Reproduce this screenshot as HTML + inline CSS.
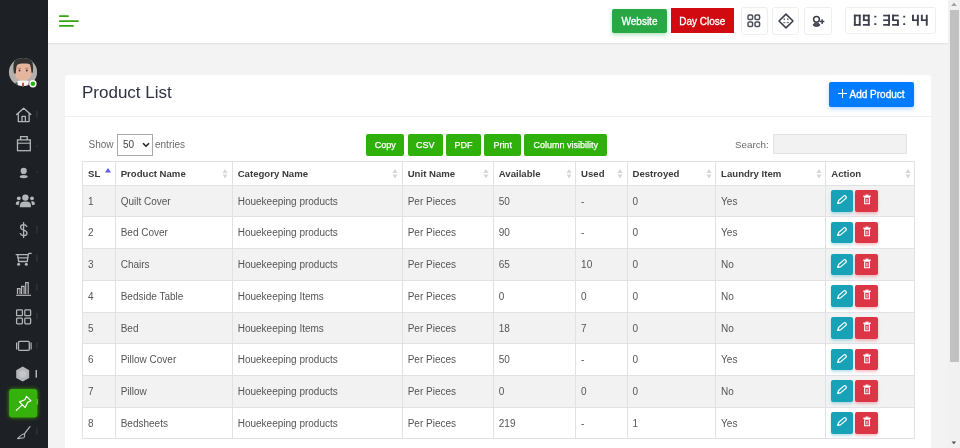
<!DOCTYPE html><html><head><meta charset="utf-8"><style>
*{margin:0;padding:0;box-sizing:border-box}
html,body{width:960px;height:448px;overflow:hidden;background:#f3f3f3;font-family:"Liberation Sans", sans-serif}
.a{position:absolute}
.t{position:absolute;white-space:nowrap;line-height:1}
.wrap{position:absolute;left:0;top:0;width:960px;height:448px;will-change:transform;opacity:0.999}
</style></head><body><div class="wrap">

<div class="a" style="left:0;top:0;width:48px;height:448px;background:#1d2024"></div>
<div class="a" style="left:48px;top:0;width:900px;height:43.4px;background:#fff;box-shadow:0 1px 2px rgba(0,0,0,.09)"></div>
<div class="a" style="left:948px;top:0;width:12px;height:448px;background:#f1f1f1"></div>
<div class="a" style="left:949.5px;top:9.7px;width:9px;height:352px;background:#c1c1c1"></div>
<svg class="a" style="left:948px;top:0" width="12" height="448"><path d="M3.2 5.9 L6 2.6 L8.8 5.9Z" fill="#a3a3a3"/><path d="M3.6 441.5 L8.1 441.5 L5.85 444.2Z" fill="#505050"/></svg>
<div class="a" style="left:65px;top:75.2px;width:866px;height:400px;background:#fff;border-radius:3px"></div>
<div class="a" style="left:65px;top:116px;width:866px;height:1px;background:#eef0f3"></div>
<div class="t" style="left:82px;top:84px;font-size:17px;color:#2f3240">Product List</div>
<div class="a" style="left:828.5px;top:82.3px;width:85.5px;height:24.6px;background:#007bff;border-radius:2px;box-shadow:0 2px 4px rgba(0,123,255,.3)"></div>
<div class="t" style="left:849.5px;top:89.6px;font-size:10px;color:#fff;-webkit-text-stroke:0.3px #fff">Add Product</div>
<div class="a" style="left:838px;top:92.8px;width:8.5px;height:1.1px;background:#fff"></div>
<div class="a" style="left:841.7px;top:89px;width:1.1px;height:8.6px;background:#fff"></div>
<div class="t" style="left:88.5px;top:140px;font-size:10px;color:#6b6b6b">Show</div>
<div class="a" style="left:117.2px;top:134px;width:35.6px;height:21.5px;border:1px solid #a9a9a9;background:#fff"></div>
<div class="t" style="left:123px;top:140px;font-size:10px;color:#444">50</div>
<svg class="a" style="left:142px;top:142px" width="8" height="6" viewBox="0 0 8 6"><path d="M1 1.2 L4 4.2 L7 1.2" fill="none" stroke="#222" stroke-width="1.6"/></svg>
<div class="t" style="left:155px;top:140px;font-size:10px;color:#6b6b6b">entries</div>
<div class="a" style="left:366.1px;top:134.1px;width:38.3px;height:22.1px;background:#2fb00b;border-radius:2px;display:flex;align-items:center;justify-content:center;font-size:9px;color:#fff;white-space:nowrap;-webkit-text-stroke:0.25px #fff;padding-top:0.5px">Copy</div>
<div class="a" style="left:407.7px;top:134.1px;width:35.3px;height:22.1px;background:#2fb00b;border-radius:2px;display:flex;align-items:center;justify-content:center;font-size:9px;color:#fff;white-space:nowrap;-webkit-text-stroke:0.25px #fff;padding-top:0.5px">CSV</div>
<div class="a" style="left:446.3px;top:134.1px;width:34.6px;height:22.1px;background:#2fb00b;border-radius:2px;display:flex;align-items:center;justify-content:center;font-size:9px;color:#fff;white-space:nowrap;-webkit-text-stroke:0.25px #fff;padding-top:0.5px">PDF</div>
<div class="a" style="left:484.3px;top:134.1px;width:36.7px;height:22.1px;background:#2fb00b;border-radius:2px;display:flex;align-items:center;justify-content:center;font-size:9px;color:#fff;white-space:nowrap;-webkit-text-stroke:0.25px #fff;padding-top:0.5px">Print</div>
<div class="a" style="left:524.4px;top:134.1px;width:82.9px;height:22.1px;background:#2fb00b;border-radius:2px;display:flex;align-items:center;justify-content:center;font-size:9px;color:#fff;white-space:nowrap;-webkit-text-stroke:0.25px #fff;padding-top:0.5px">Column visibility</div>
<div class="t" style="left:735px;top:139.6px;font-size:9.8px;color:#6b6b6b">Search:</div>
<div class="a" style="left:772.9px;top:133.9px;width:134px;height:20.6px;background:#f2f2f2;border:1px solid #e3e3e3"></div>
<div class="a" style="left:82.5px;top:161.6px;width:832.0px;height:23.599999999999994px;background:#fff"></div>
<div class="a" style="left:82.5px;top:185.20px;width:832.0px;height:31.7px;background:#f2f2f2"></div>
<div class="a" style="left:82.5px;top:216.90px;width:832.0px;height:31.7px;background:#fff"></div>
<div class="a" style="left:82.5px;top:248.60px;width:832.0px;height:31.7px;background:#f2f2f2"></div>
<div class="a" style="left:82.5px;top:280.30px;width:832.0px;height:31.7px;background:#fff"></div>
<div class="a" style="left:82.5px;top:312.00px;width:832.0px;height:31.7px;background:#f2f2f2"></div>
<div class="a" style="left:82.5px;top:343.70px;width:832.0px;height:31.7px;background:#fff"></div>
<div class="a" style="left:82.5px;top:375.40px;width:832.0px;height:31.7px;background:#f2f2f2"></div>
<div class="a" style="left:82.5px;top:407.10px;width:832.0px;height:31.7px;background:#fff"></div>
<div class="a" style="left:82.0px;top:161.10px;width:833.0px;height:1px;background:#e0e2e6"></div>
<div class="a" style="left:82.0px;top:184.70px;width:833.0px;height:1px;background:#e0e2e6"></div>
<div class="a" style="left:82.0px;top:216.40px;width:833.0px;height:1px;background:#e0e2e6"></div>
<div class="a" style="left:82.0px;top:248.10px;width:833.0px;height:1px;background:#e0e2e6"></div>
<div class="a" style="left:82.0px;top:279.80px;width:833.0px;height:1px;background:#e0e2e6"></div>
<div class="a" style="left:82.0px;top:311.50px;width:833.0px;height:1px;background:#e0e2e6"></div>
<div class="a" style="left:82.0px;top:343.20px;width:833.0px;height:1px;background:#e0e2e6"></div>
<div class="a" style="left:82.0px;top:374.90px;width:833.0px;height:1px;background:#e0e2e6"></div>
<div class="a" style="left:82.0px;top:406.60px;width:833.0px;height:1px;background:#e0e2e6"></div>
<div class="a" style="left:82.0px;top:438.30px;width:833.0px;height:1px;background:#e0e2e6"></div>
<div class="a" style="left:82.00px;top:161.1px;width:1px;height:278.2px;background:#e0e2e6"></div>
<div class="a" style="left:114.70px;top:161.1px;width:1px;height:278.2px;background:#e0e2e6"></div>
<div class="a" style="left:231.70px;top:161.1px;width:1px;height:278.2px;background:#e0e2e6"></div>
<div class="a" style="left:401.70px;top:161.1px;width:1px;height:278.2px;background:#e0e2e6"></div>
<div class="a" style="left:492.80px;top:161.1px;width:1px;height:278.2px;background:#e0e2e6"></div>
<div class="a" style="left:575.10px;top:161.1px;width:1px;height:278.2px;background:#e0e2e6"></div>
<div class="a" style="left:626.50px;top:161.1px;width:1px;height:278.2px;background:#e0e2e6"></div>
<div class="a" style="left:715.10px;top:161.1px;width:1px;height:278.2px;background:#e0e2e6"></div>
<div class="a" style="left:825.30px;top:161.1px;width:1px;height:278.2px;background:#e0e2e6"></div>
<div class="a" style="left:914.00px;top:161.1px;width:1px;height:278.2px;background:#e0e2e6"></div>
<div class="t" style="left:88.0px;top:168.6px;font-size:9.6px;font-weight:bold;color:#3a3a3a">SL</div>
<svg class="a" style="left:105px;top:168px" width="6" height="5" viewBox="0 0 6 5"><path d="M3 0 L6 4.5 L0 4.5Z" fill="#5b60e3"/></svg>
<div class="t" style="left:120.7px;top:168.6px;font-size:9.6px;font-weight:bold;color:#3a3a3a">Product Name</div>
<svg class="a" style="left:222.2px;top:168.5px" width="6" height="10" viewBox="0 0 6 10"><path d="M3 0 L5.5 4 L0.5 4Z M3 9.6 L5.5 5.4 L0.5 5.4Z" fill="#d6d6d6"/></svg>
<div class="t" style="left:237.7px;top:168.6px;font-size:9.6px;font-weight:bold;color:#3a3a3a">Category Name</div>
<svg class="a" style="left:392.2px;top:168.5px" width="6" height="10" viewBox="0 0 6 10"><path d="M3 0 L5.5 4 L0.5 4Z M3 9.6 L5.5 5.4 L0.5 5.4Z" fill="#d6d6d6"/></svg>
<div class="t" style="left:407.7px;top:168.6px;font-size:9.6px;font-weight:bold;color:#3a3a3a">Unit Name</div>
<svg class="a" style="left:483.3px;top:168.5px" width="6" height="10" viewBox="0 0 6 10"><path d="M3 0 L5.5 4 L0.5 4Z M3 9.6 L5.5 5.4 L0.5 5.4Z" fill="#d6d6d6"/></svg>
<div class="t" style="left:498.8px;top:168.6px;font-size:9.6px;font-weight:bold;color:#3a3a3a">Available</div>
<svg class="a" style="left:565.6px;top:168.5px" width="6" height="10" viewBox="0 0 6 10"><path d="M3 0 L5.5 4 L0.5 4Z M3 9.6 L5.5 5.4 L0.5 5.4Z" fill="#d6d6d6"/></svg>
<div class="t" style="left:581.1px;top:168.6px;font-size:9.6px;font-weight:bold;color:#3a3a3a">Used</div>
<svg class="a" style="left:617.0px;top:168.5px" width="6" height="10" viewBox="0 0 6 10"><path d="M3 0 L5.5 4 L0.5 4Z M3 9.6 L5.5 5.4 L0.5 5.4Z" fill="#d6d6d6"/></svg>
<div class="t" style="left:632.5px;top:168.6px;font-size:9.6px;font-weight:bold;color:#3a3a3a">Destroyed</div>
<svg class="a" style="left:705.6px;top:168.5px" width="6" height="10" viewBox="0 0 6 10"><path d="M3 0 L5.5 4 L0.5 4Z M3 9.6 L5.5 5.4 L0.5 5.4Z" fill="#d6d6d6"/></svg>
<div class="t" style="left:721.1px;top:168.6px;font-size:9.6px;font-weight:bold;color:#3a3a3a">Laundry Item</div>
<svg class="a" style="left:815.8px;top:168.5px" width="6" height="10" viewBox="0 0 6 10"><path d="M3 0 L5.5 4 L0.5 4Z M3 9.6 L5.5 5.4 L0.5 5.4Z" fill="#d6d6d6"/></svg>
<div class="t" style="left:831.3px;top:168.6px;font-size:9.6px;font-weight:bold;color:#3a3a3a">Action</div>
<svg class="a" style="left:904.5px;top:168.5px" width="6" height="10" viewBox="0 0 6 10"><path d="M3 0 L5.5 4 L0.5 4Z M3 9.6 L5.5 5.4 L0.5 5.4Z" fill="#d6d6d6"/></svg>
<div class="t" style="left:88.0px;top:196.7px;font-size:10px;color:#555">1</div>
<div class="t" style="left:120.7px;top:196.7px;font-size:10px;color:#555">Quilt Cover</div>
<div class="t" style="left:237.7px;top:196.7px;font-size:10px;color:#555">Houekeeping products</div>
<div class="t" style="left:407.7px;top:196.7px;font-size:10px;color:#555">Per Pieces</div>
<div class="t" style="left:498.8px;top:196.7px;font-size:10px;color:#555">50</div>
<div class="t" style="left:581.1px;top:196.7px;font-size:10px;color:#555">-</div>
<div class="t" style="left:632.5px;top:196.7px;font-size:10px;color:#555">0</div>
<div class="t" style="left:721.1px;top:196.7px;font-size:10px;color:#555">Yes</div>
<div class="a" style="left:830.5px;top:190.2px;width:22.6px;height:21.5px;background:#17a2b8;border-radius:2px;box-shadow:0 2px 3px rgba(23,162,184,.3)"></div>
<div class="a" style="left:855.2px;top:190.2px;width:22.6px;height:21.5px;background:#dc3545;border-radius:2px;box-shadow:0 2px 3px rgba(220,53,69,.3)"></div>
<svg class="a" style="left:0;top:185.20px" width="960" height="32" viewBox="0 185.20 960 32"><g transform="translate(837.6 203.60) rotate(-40.5)"><path d="M0 0 L2.6 -1.55 L9.7 -1.55 Q10.9 -1.55 10.9 0 Q10.9 1.55 9.7 1.55 L2.6 1.55 Z" fill="none" stroke="#fff" stroke-width="1.15" stroke-linejoin="round"/><path d="M0 0 L1.6 -0.9 L1.6 0.9Z" fill="#fff"/></g><g fill="#fff"><rect x="865.5" y="194.80" width="3" height="1.2"/><rect x="863.3" y="195.80" width="7.5" height="1.4"/><path d="M864.1 197.40 H870 V204.40 H864.1 Z M865.2 198.30 V203.40 H868.9 V198.30 Z" fill-rule="evenodd"/><rect x="865.9" y="199.00" width="0.7" height="3.7" opacity=".85"/><rect x="867.5" y="199.00" width="0.7" height="3.7" opacity=".85"/></g></svg>
<div class="t" style="left:88.0px;top:228.4px;font-size:10px;color:#555">2</div>
<div class="t" style="left:120.7px;top:228.4px;font-size:10px;color:#555">Bed Cover</div>
<div class="t" style="left:237.7px;top:228.4px;font-size:10px;color:#555">Houekeeping products</div>
<div class="t" style="left:407.7px;top:228.4px;font-size:10px;color:#555">Per Pieces</div>
<div class="t" style="left:498.8px;top:228.4px;font-size:10px;color:#555">90</div>
<div class="t" style="left:581.1px;top:228.4px;font-size:10px;color:#555">-</div>
<div class="t" style="left:632.5px;top:228.4px;font-size:10px;color:#555">0</div>
<div class="t" style="left:721.1px;top:228.4px;font-size:10px;color:#555">Yes</div>
<div class="a" style="left:830.5px;top:221.9px;width:22.6px;height:21.5px;background:#17a2b8;border-radius:2px;box-shadow:0 2px 3px rgba(23,162,184,.3)"></div>
<div class="a" style="left:855.2px;top:221.9px;width:22.6px;height:21.5px;background:#dc3545;border-radius:2px;box-shadow:0 2px 3px rgba(220,53,69,.3)"></div>
<svg class="a" style="left:0;top:216.90px" width="960" height="32" viewBox="0 216.90 960 32"><g transform="translate(837.6 235.30) rotate(-40.5)"><path d="M0 0 L2.6 -1.55 L9.7 -1.55 Q10.9 -1.55 10.9 0 Q10.9 1.55 9.7 1.55 L2.6 1.55 Z" fill="none" stroke="#fff" stroke-width="1.15" stroke-linejoin="round"/><path d="M0 0 L1.6 -0.9 L1.6 0.9Z" fill="#fff"/></g><g fill="#fff"><rect x="865.5" y="226.50" width="3" height="1.2"/><rect x="863.3" y="227.50" width="7.5" height="1.4"/><path d="M864.1 229.10 H870 V236.10 H864.1 Z M865.2 230.00 V235.10 H868.9 V230.00 Z" fill-rule="evenodd"/><rect x="865.9" y="230.70" width="0.7" height="3.7" opacity=".85"/><rect x="867.5" y="230.70" width="0.7" height="3.7" opacity=".85"/></g></svg>
<div class="t" style="left:88.0px;top:260.1px;font-size:10px;color:#555">3</div>
<div class="t" style="left:120.7px;top:260.1px;font-size:10px;color:#555">Chairs</div>
<div class="t" style="left:237.7px;top:260.1px;font-size:10px;color:#555">Houekeeping products</div>
<div class="t" style="left:407.7px;top:260.1px;font-size:10px;color:#555">Per Pieces</div>
<div class="t" style="left:498.8px;top:260.1px;font-size:10px;color:#555">65</div>
<div class="t" style="left:581.1px;top:260.1px;font-size:10px;color:#555">10</div>
<div class="t" style="left:632.5px;top:260.1px;font-size:10px;color:#555">0</div>
<div class="t" style="left:721.1px;top:260.1px;font-size:10px;color:#555">No</div>
<div class="a" style="left:830.5px;top:253.6px;width:22.6px;height:21.5px;background:#17a2b8;border-radius:2px;box-shadow:0 2px 3px rgba(23,162,184,.3)"></div>
<div class="a" style="left:855.2px;top:253.6px;width:22.6px;height:21.5px;background:#dc3545;border-radius:2px;box-shadow:0 2px 3px rgba(220,53,69,.3)"></div>
<svg class="a" style="left:0;top:248.60px" width="960" height="32" viewBox="0 248.60 960 32"><g transform="translate(837.6 267.00) rotate(-40.5)"><path d="M0 0 L2.6 -1.55 L9.7 -1.55 Q10.9 -1.55 10.9 0 Q10.9 1.55 9.7 1.55 L2.6 1.55 Z" fill="none" stroke="#fff" stroke-width="1.15" stroke-linejoin="round"/><path d="M0 0 L1.6 -0.9 L1.6 0.9Z" fill="#fff"/></g><g fill="#fff"><rect x="865.5" y="258.20" width="3" height="1.2"/><rect x="863.3" y="259.20" width="7.5" height="1.4"/><path d="M864.1 260.80 H870 V267.80 H864.1 Z M865.2 261.70 V266.80 H868.9 V261.70 Z" fill-rule="evenodd"/><rect x="865.9" y="262.40" width="0.7" height="3.7" opacity=".85"/><rect x="867.5" y="262.40" width="0.7" height="3.7" opacity=".85"/></g></svg>
<div class="t" style="left:88.0px;top:291.8px;font-size:10px;color:#555">4</div>
<div class="t" style="left:120.7px;top:291.8px;font-size:10px;color:#555">Bedside Table</div>
<div class="t" style="left:237.7px;top:291.8px;font-size:10px;color:#555">Houekeeping Items</div>
<div class="t" style="left:407.7px;top:291.8px;font-size:10px;color:#555">Per Pieces</div>
<div class="t" style="left:498.8px;top:291.8px;font-size:10px;color:#555">0</div>
<div class="t" style="left:581.1px;top:291.8px;font-size:10px;color:#555">0</div>
<div class="t" style="left:632.5px;top:291.8px;font-size:10px;color:#555">0</div>
<div class="t" style="left:721.1px;top:291.8px;font-size:10px;color:#555">No</div>
<div class="a" style="left:830.5px;top:285.3px;width:22.6px;height:21.5px;background:#17a2b8;border-radius:2px;box-shadow:0 2px 3px rgba(23,162,184,.3)"></div>
<div class="a" style="left:855.2px;top:285.3px;width:22.6px;height:21.5px;background:#dc3545;border-radius:2px;box-shadow:0 2px 3px rgba(220,53,69,.3)"></div>
<svg class="a" style="left:0;top:280.30px" width="960" height="32" viewBox="0 280.30 960 32"><g transform="translate(837.6 298.70) rotate(-40.5)"><path d="M0 0 L2.6 -1.55 L9.7 -1.55 Q10.9 -1.55 10.9 0 Q10.9 1.55 9.7 1.55 L2.6 1.55 Z" fill="none" stroke="#fff" stroke-width="1.15" stroke-linejoin="round"/><path d="M0 0 L1.6 -0.9 L1.6 0.9Z" fill="#fff"/></g><g fill="#fff"><rect x="865.5" y="289.90" width="3" height="1.2"/><rect x="863.3" y="290.90" width="7.5" height="1.4"/><path d="M864.1 292.50 H870 V299.50 H864.1 Z M865.2 293.40 V298.50 H868.9 V293.40 Z" fill-rule="evenodd"/><rect x="865.9" y="294.10" width="0.7" height="3.7" opacity=".85"/><rect x="867.5" y="294.10" width="0.7" height="3.7" opacity=".85"/></g></svg>
<div class="t" style="left:88.0px;top:323.5px;font-size:10px;color:#555">5</div>
<div class="t" style="left:120.7px;top:323.5px;font-size:10px;color:#555">Bed</div>
<div class="t" style="left:237.7px;top:323.5px;font-size:10px;color:#555">Houekeeping Items</div>
<div class="t" style="left:407.7px;top:323.5px;font-size:10px;color:#555">Per Pieces</div>
<div class="t" style="left:498.8px;top:323.5px;font-size:10px;color:#555">18</div>
<div class="t" style="left:581.1px;top:323.5px;font-size:10px;color:#555">7</div>
<div class="t" style="left:632.5px;top:323.5px;font-size:10px;color:#555">0</div>
<div class="t" style="left:721.1px;top:323.5px;font-size:10px;color:#555">No</div>
<div class="a" style="left:830.5px;top:317.0px;width:22.6px;height:21.5px;background:#17a2b8;border-radius:2px;box-shadow:0 2px 3px rgba(23,162,184,.3)"></div>
<div class="a" style="left:855.2px;top:317.0px;width:22.6px;height:21.5px;background:#dc3545;border-radius:2px;box-shadow:0 2px 3px rgba(220,53,69,.3)"></div>
<svg class="a" style="left:0;top:312.00px" width="960" height="32" viewBox="0 312.00 960 32"><g transform="translate(837.6 330.40) rotate(-40.5)"><path d="M0 0 L2.6 -1.55 L9.7 -1.55 Q10.9 -1.55 10.9 0 Q10.9 1.55 9.7 1.55 L2.6 1.55 Z" fill="none" stroke="#fff" stroke-width="1.15" stroke-linejoin="round"/><path d="M0 0 L1.6 -0.9 L1.6 0.9Z" fill="#fff"/></g><g fill="#fff"><rect x="865.5" y="321.60" width="3" height="1.2"/><rect x="863.3" y="322.60" width="7.5" height="1.4"/><path d="M864.1 324.20 H870 V331.20 H864.1 Z M865.2 325.10 V330.20 H868.9 V325.10 Z" fill-rule="evenodd"/><rect x="865.9" y="325.80" width="0.7" height="3.7" opacity=".85"/><rect x="867.5" y="325.80" width="0.7" height="3.7" opacity=".85"/></g></svg>
<div class="t" style="left:88.0px;top:355.2px;font-size:10px;color:#555">6</div>
<div class="t" style="left:120.7px;top:355.2px;font-size:10px;color:#555">Pillow Cover</div>
<div class="t" style="left:237.7px;top:355.2px;font-size:10px;color:#555">Houekeeping products</div>
<div class="t" style="left:407.7px;top:355.2px;font-size:10px;color:#555">Per Pieces</div>
<div class="t" style="left:498.8px;top:355.2px;font-size:10px;color:#555">50</div>
<div class="t" style="left:581.1px;top:355.2px;font-size:10px;color:#555">-</div>
<div class="t" style="left:632.5px;top:355.2px;font-size:10px;color:#555">0</div>
<div class="t" style="left:721.1px;top:355.2px;font-size:10px;color:#555">Yes</div>
<div class="a" style="left:830.5px;top:348.7px;width:22.6px;height:21.5px;background:#17a2b8;border-radius:2px;box-shadow:0 2px 3px rgba(23,162,184,.3)"></div>
<div class="a" style="left:855.2px;top:348.7px;width:22.6px;height:21.5px;background:#dc3545;border-radius:2px;box-shadow:0 2px 3px rgba(220,53,69,.3)"></div>
<svg class="a" style="left:0;top:343.70px" width="960" height="32" viewBox="0 343.70 960 32"><g transform="translate(837.6 362.10) rotate(-40.5)"><path d="M0 0 L2.6 -1.55 L9.7 -1.55 Q10.9 -1.55 10.9 0 Q10.9 1.55 9.7 1.55 L2.6 1.55 Z" fill="none" stroke="#fff" stroke-width="1.15" stroke-linejoin="round"/><path d="M0 0 L1.6 -0.9 L1.6 0.9Z" fill="#fff"/></g><g fill="#fff"><rect x="865.5" y="353.30" width="3" height="1.2"/><rect x="863.3" y="354.30" width="7.5" height="1.4"/><path d="M864.1 355.90 H870 V362.90 H864.1 Z M865.2 356.80 V361.90 H868.9 V356.80 Z" fill-rule="evenodd"/><rect x="865.9" y="357.50" width="0.7" height="3.7" opacity=".85"/><rect x="867.5" y="357.50" width="0.7" height="3.7" opacity=".85"/></g></svg>
<div class="t" style="left:88.0px;top:386.9px;font-size:10px;color:#555">7</div>
<div class="t" style="left:120.7px;top:386.9px;font-size:10px;color:#555">Pillow</div>
<div class="t" style="left:237.7px;top:386.9px;font-size:10px;color:#555">Houekeeping products</div>
<div class="t" style="left:407.7px;top:386.9px;font-size:10px;color:#555">Per Pieces</div>
<div class="t" style="left:498.8px;top:386.9px;font-size:10px;color:#555">0</div>
<div class="t" style="left:581.1px;top:386.9px;font-size:10px;color:#555">0</div>
<div class="t" style="left:632.5px;top:386.9px;font-size:10px;color:#555">0</div>
<div class="t" style="left:721.1px;top:386.9px;font-size:10px;color:#555">No</div>
<div class="a" style="left:830.5px;top:380.4px;width:22.6px;height:21.5px;background:#17a2b8;border-radius:2px;box-shadow:0 2px 3px rgba(23,162,184,.3)"></div>
<div class="a" style="left:855.2px;top:380.4px;width:22.6px;height:21.5px;background:#dc3545;border-radius:2px;box-shadow:0 2px 3px rgba(220,53,69,.3)"></div>
<svg class="a" style="left:0;top:375.40px" width="960" height="32" viewBox="0 375.40 960 32"><g transform="translate(837.6 393.80) rotate(-40.5)"><path d="M0 0 L2.6 -1.55 L9.7 -1.55 Q10.9 -1.55 10.9 0 Q10.9 1.55 9.7 1.55 L2.6 1.55 Z" fill="none" stroke="#fff" stroke-width="1.15" stroke-linejoin="round"/><path d="M0 0 L1.6 -0.9 L1.6 0.9Z" fill="#fff"/></g><g fill="#fff"><rect x="865.5" y="385.00" width="3" height="1.2"/><rect x="863.3" y="386.00" width="7.5" height="1.4"/><path d="M864.1 387.60 H870 V394.60 H864.1 Z M865.2 388.50 V393.60 H868.9 V388.50 Z" fill-rule="evenodd"/><rect x="865.9" y="389.20" width="0.7" height="3.7" opacity=".85"/><rect x="867.5" y="389.20" width="0.7" height="3.7" opacity=".85"/></g></svg>
<div class="t" style="left:88.0px;top:418.6px;font-size:10px;color:#555">8</div>
<div class="t" style="left:120.7px;top:418.6px;font-size:10px;color:#555">Bedsheets</div>
<div class="t" style="left:237.7px;top:418.6px;font-size:10px;color:#555">Houekeeping products</div>
<div class="t" style="left:407.7px;top:418.6px;font-size:10px;color:#555">Per Pieces</div>
<div class="t" style="left:498.8px;top:418.6px;font-size:10px;color:#555">219</div>
<div class="t" style="left:581.1px;top:418.6px;font-size:10px;color:#555">-</div>
<div class="t" style="left:632.5px;top:418.6px;font-size:10px;color:#555">1</div>
<div class="t" style="left:721.1px;top:418.6px;font-size:10px;color:#555">Yes</div>
<div class="a" style="left:830.5px;top:412.1px;width:22.6px;height:21.5px;background:#17a2b8;border-radius:2px;box-shadow:0 2px 3px rgba(23,162,184,.3)"></div>
<div class="a" style="left:855.2px;top:412.1px;width:22.6px;height:21.5px;background:#dc3545;border-radius:2px;box-shadow:0 2px 3px rgba(220,53,69,.3)"></div>
<svg class="a" style="left:0;top:407.10px" width="960" height="32" viewBox="0 407.10 960 32"><g transform="translate(837.6 425.50) rotate(-40.5)"><path d="M0 0 L2.6 -1.55 L9.7 -1.55 Q10.9 -1.55 10.9 0 Q10.9 1.55 9.7 1.55 L2.6 1.55 Z" fill="none" stroke="#fff" stroke-width="1.15" stroke-linejoin="round"/><path d="M0 0 L1.6 -0.9 L1.6 0.9Z" fill="#fff"/></g><g fill="#fff"><rect x="865.5" y="416.70" width="3" height="1.2"/><rect x="863.3" y="417.70" width="7.5" height="1.4"/><path d="M864.1 419.30 H870 V426.30 H864.1 Z M865.2 420.20 V425.30 H868.9 V420.20 Z" fill-rule="evenodd"/><rect x="865.9" y="420.90" width="0.7" height="3.7" opacity=".85"/><rect x="867.5" y="420.90" width="0.7" height="3.7" opacity=".85"/></g></svg>
<div class="a" style="left:612px;top:8.8px;width:55px;height:24.2px;background:#28a745;border-radius:2px;box-shadow:0 2px 4px rgba(40,167,69,.35);display:flex;align-items:center;justify-content:center;font-size:10px;color:#fff;-webkit-text-stroke:0.3px #fff;padding-top:1.4px">Website</div>
<div class="a" style="left:670.6px;top:8.2px;width:63.4px;height:24.8px;background:#d10a12;display:flex;align-items:center;justify-content:center;font-size:10px;color:#fff;-webkit-text-stroke:0.3px #fff;padding-top:1.4px">Day Close</div>
<div class="a" style="left:740.5px;top:7.3px;width:27px;height:27.3px;border:1px solid #eceef0;border-radius:3px;background:#fff"></div>
<div class="a" style="left:772.2px;top:7.3px;width:27.3px;height:27.3px;border:1px solid #eceef0;border-radius:3px;background:#fff"></div>
<div class="a" style="left:804.3px;top:7.3px;width:28px;height:27.3px;border:1px solid #eceef0;border-radius:3px;background:#fff"></div>
<div class="a" style="left:845.4px;top:7.2px;width:91px;height:27.3px;border:1px solid #eceef0;border-radius:3px;background:#fff"></div>
<svg class="a" style="left:746px;top:13px" width="16" height="16" viewBox="0 0 16 16"><g fill="none" stroke="#4a4e5a" stroke-width="1.5"><rect x="2" y="2" width="4.6" height="4.6" rx="1.3"/><rect x="9" y="2" width="4.6" height="4.6" rx="1.3"/><rect x="2" y="9" width="4.6" height="4.6" rx="1.3"/><rect x="9" y="9" width="4.6" height="4.6" rx="1.3"/></g></svg>
<svg class="a" style="left:776px;top:11px" width="20" height="20" viewBox="0 0 20 20"><path d="M10 3.1 L17 10 L10 16.9 L3 10 Z" fill="none" stroke="#3b3e48" stroke-width="1.5" stroke-linejoin="round"/><g fill="#6a6d75"><ellipse cx="8.3" cy="8.3" rx="0.8" ry="1"/><ellipse cx="11.8" cy="8.3" rx="0.8" ry="1"/><rect x="7.2" y="11.1" width="2.2" height="1.1"/><rect x="10.7" y="11.1" width="2.2" height="1.1"/></g></svg>
<svg class="a" style="left:808px;top:11px" width="20" height="20" viewBox="0 0 20 20"><circle cx="8.5" cy="8.3" r="2.9" fill="none" stroke="#3b3e48" stroke-width="1.5"/><ellipse cx="8.5" cy="13.8" rx="3.3" ry="1.6" fill="#4a4d57" stroke="#3b3e48" stroke-width="0.9"/><path d="M11.9 10.5 H16.3 M14.1 8.2 V12.9" stroke="#3b3e48" stroke-width="1.4"/></svg>
<svg class="a" style="left:56px;top:12px" width="26" height="18" viewBox="0 0 26 18"><g stroke="#33a60f" stroke-width="1.8" stroke-linecap="round"><path d="M3.8 4.1 H12.1"/><path d="M3.8 9.05 H22"/><path d="M3.8 13.95 H17"/></g></svg>
<svg class="a" style="left:0;top:0" width="960" height="448"><g fill="#3d404c"><rect x="853.90" y="14.70" width="6.60" height="1.7"/><rect x="858.80" y="14.70" width="1.9" height="5.50"/><rect x="858.80" y="20.20" width="1.9" height="5.50"/><rect x="853.90" y="24.00" width="6.60" height="1.7"/><rect x="853.90" y="20.20" width="1.9" height="5.50"/><rect x="853.90" y="14.70" width="1.9" height="5.50"/><rect x="862.90" y="14.70" width="6.60" height="1.7"/><rect x="867.80" y="14.70" width="1.9" height="5.50"/><rect x="867.80" y="20.20" width="1.9" height="5.50"/><rect x="862.90" y="24.00" width="6.60" height="1.7"/><rect x="862.90" y="14.70" width="1.9" height="5.50"/><rect x="862.90" y="19.35" width="6.60" height="1.7"/><rect x="883.20" y="14.70" width="6.60" height="1.7"/><rect x="888.10" y="14.70" width="1.9" height="5.50"/><rect x="888.10" y="20.20" width="1.9" height="5.50"/><rect x="883.20" y="24.00" width="6.60" height="1.7"/><rect x="883.20" y="19.35" width="6.60" height="1.7"/><rect x="892.10" y="14.70" width="6.60" height="1.7"/><rect x="897.00" y="20.20" width="1.9" height="5.50"/><rect x="892.10" y="24.00" width="6.60" height="1.7"/><rect x="892.10" y="14.70" width="1.9" height="5.50"/><rect x="892.10" y="19.35" width="6.60" height="1.7"/><rect x="916.90" y="14.70" width="1.9" height="5.50"/><rect x="916.90" y="20.20" width="1.9" height="5.50"/><rect x="912.00" y="14.70" width="1.9" height="5.50"/><rect x="912.00" y="19.35" width="6.60" height="1.7"/><rect x="925.80" y="14.70" width="1.9" height="5.50"/><rect x="925.80" y="20.20" width="1.9" height="5.50"/><rect x="920.90" y="14.70" width="1.9" height="5.50"/><rect x="920.90" y="19.35" width="6.60" height="1.7"/><rect x="874.3" y="15.8" width="2" height="1.7"/><rect x="874.3" y="23.2" width="2" height="1.8"/><rect x="903.2" y="15.8" width="2" height="1.7"/><rect x="903.2" y="23.2" width="2" height="1.8"/></g></svg>
<svg class="a" style="left:0;top:0" width="48" height="448" viewBox="0 0 48 448"><path d="M16.6 114.6 L23.7 108.2 L30.8 114.6 M18.3 113.6 V121.6 H29.1 V113.6 M22 121.6 V116.3 H25.4 V121.6" fill="none" stroke="#b4b6b9" stroke-width="1.3" stroke-linejoin="round" stroke-linecap="round"/><rect x="17.5" y="139.9" width="12.8" height="10.8" fill="none" stroke="#b4b6b9" stroke-width="1.3"/><path d="M17.5 143.2 H30.3" stroke="#b4b6b9" stroke-width="1.1"/><path d="M20.6 140 V136.7 H27.2 V140" fill="none" stroke="#b4b6b9" stroke-width="1.3"/><circle cx="23.7" cy="170.9" r="3.1" fill="#b4b6b9"/><ellipse cx="23.7" cy="176.6" rx="4" ry="1.7" fill="#b4b6b9"/><circle cx="25.4" cy="197.6" r="3.2" fill="#b4b6b9"/><path d="M19.8 207.3 C19.8 202.5 21.5 201.6 25.4 201.6 C29.3 201.6 31 202.5 31 207.3 Z" fill="#b4b6b9"/><circle cx="18.8" cy="198.3" r="1.9" fill="#b4b6b9"/><circle cx="32" cy="198.3" r="1.9" fill="#b4b6b9"/><path d="M15.8 204.6 C15.8 201.5 16.8 201.2 19.6 201.2 L18.6 205.2 Z M34.9 204.6 C34.9 201.5 33.9 201.2 31.1 201.2 L32.1 205.2 Z" fill="#b4b6b9"/><path d="M26.8 226.5 C26 224.8 24.6 224.6 23.5 224.6 C21.6 224.6 20.6 225.8 20.6 227.2 C20.6 230.8 27 229.3 27 233 C27 234.6 25.6 235.6 23.6 235.6 C22 235.6 20.8 234.9 20.3 233.6 M23.6 222.6 V237.6" fill="none" stroke="#b4b6b9" stroke-width="1.3" stroke-linecap="round"/><path d="M16.2 254.6 H28.2 L27.3 261.5 H18.6 L17.6 254.6 M17.7 257.8 H28 M28.2 254.6 L29 253.4 H31.2" fill="none" stroke="#b4b6b9" stroke-width="1.3" stroke-linejoin="round" stroke-linecap="round"/><circle cx="18.6" cy="264.2" r="1.5" fill="#b4b6b9"/><circle cx="26.3" cy="264.2" r="1.5" fill="#b4b6b9"/><path d="M17.5 294 V288.6 H20 V294 M21.6 294 V286.4 H24.1 V294 M25.7 294 V282.6 H28.2 V294" fill="none" stroke="#b4b6b9" stroke-width="1.2"/><path d="M16.2 295.3 H31" stroke="#b4b6b9" stroke-width="1.2"/><rect x="16.6" y="309.9" width="5.8" height="5.8" rx="0.8" fill="none" stroke="#b4b6b9" stroke-width="1.3"/><rect x="24.8" y="309.9" width="5.8" height="5.8" rx="0.8" fill="none" stroke="#b4b6b9" stroke-width="1.3"/><rect x="16.6" y="318.1" width="5.8" height="5.8" rx="0.8" fill="none" stroke="#b4b6b9" stroke-width="1.3"/><rect x="24.8" y="318.1" width="5.8" height="5.8" rx="0.8" fill="none" stroke="#b4b6b9" stroke-width="1.3"/><rect x="18.5" y="341.4" width="10.8" height="8.9" rx="1" fill="none" stroke="#b4b6b9" stroke-width="1.3"/><path d="M16.6 342.6 V349.4 M31.1 342.6 V349.4" stroke="#b4b6b9" stroke-width="1.2"/><path d="M22.7 366.6 L29.2 370.3 V377.9 L22.7 381.6 L16.2 377.9 V370.3 Z" fill="#b4b6b9"/><circle cx="22.7" cy="374.1" r="3.6" fill="#c4c6c9"/><rect x="36.4" y="110.8" width="1" height="6.5" fill="#3a3d42"/><rect x="36.4" y="145" width="1" height="2.0" fill="#3a3d42"/><rect x="36.4" y="171" width="1" height="2.0" fill="#3a3d42"/><rect x="36.4" y="226" width="1" height="7.0" fill="#3a3d42"/><rect x="36.4" y="255" width="1" height="6.7" fill="#3a3d42"/><rect x="36.4" y="284" width="1" height="6.5" fill="#3a3d42"/><rect x="36.4" y="313" width="1" height="6.3" fill="#3a3d42"/><rect x="36.4" y="342" width="1" height="6.0" fill="#3a3d42"/><rect x="36.4" y="428.5" width="1" height="6.0" fill="#3a3d42"/><rect x="35.6" y="370" width="1.3" height="7.7" fill="#c9cbce"/><defs><filter id="gl" x="-50%" y="-50%" width="200%" height="200%"><feGaussianBlur stdDeviation="2.2"/></filter></defs><rect x="9.1" y="389" width="28.2" height="28.4" rx="3" fill="#3fb80c" filter="url(#gl)" opacity="0.8"/><rect x="9.1" y="389" width="28.2" height="28.4" rx="3" fill="#36b00a"/><rect x="36.8" y="399" width="0.8" height="5.5" fill="#8fd870"/><path d="M26.5 396.3 L31 400.8 L27.6 402.4 L25.2 407.6 L19.5 401.9 L24.9 399.7 Z M22.2 404.9 L16.3 410.4" fill="none" stroke="#fff" stroke-width="1.2" stroke-linejoin="round" stroke-linecap="round"/><path d="M29.9 426.6 L24.2 434.2" stroke="#b4b6b9" stroke-width="1.2" stroke-linecap="round"/><path d="M24.5 434 C22.5 433.8 20 436 17.6 438.6 L23.8 437.8 C24.6 437 24.9 435.2 24.5 434 Z" fill="none" stroke="#b4b6b9" stroke-width="1.1" stroke-linejoin="round"/><defs><clipPath id="av"><circle cx="23" cy="72.1" r="14.1"/></clipPath></defs><g clip-path="url(#av)"><rect x="0" y="50" width="48" height="48" fill="#b3b0ab"/><path d="M12 90 C13 83 17 81.5 23 81.5 C29 81.5 33 83 34 90 Z" fill="#4a4a4a"/><path d="M17.4 81 L23 80 L28.8 81 L28 90 L18 90 Z" fill="#f6f6f6"/><path d="M22.3 82.8 L23.8 82.8 L24.2 88 L21.9 88 Z" fill="#d42a2a"/><path d="M14.8 66 C14.8 60 19 58 23 58 C27 58 31.8 60 31.8 66 L31.8 72 C31.8 77 28 80.6 23 80.6 C18 80.6 14.8 77 14.8 72 Z" fill="#e6b59d"/><path d="M14 73.5 C12.6 66 13.5 60.5 17 58.6 C20 57 26 57 29.5 58.6 C33 60.5 33.6 66 32.8 72.7 L31.5 72.7 C31.2 68 30.6 65.5 29.4 64 C26 63.5 20 63 17.2 64.8 C16.2 67 16 70 15.8 73.5 Z" fill="#323232"/><path d="M17.8 68.3 H21.2 M25.2 68.3 H28.6" stroke="#b0705a" stroke-width="0.8"/><circle cx="19.5" cy="70.5" r="0.9" fill="#3a3030"/><circle cx="26.8" cy="70.5" r="0.9" fill="#3a3030"/></g><circle cx="32.9" cy="83.7" r="3.7" fill="#fff"/><circle cx="32.9" cy="83.7" r="2.3" fill="#2db40c"/></svg>
</div></body></html>
